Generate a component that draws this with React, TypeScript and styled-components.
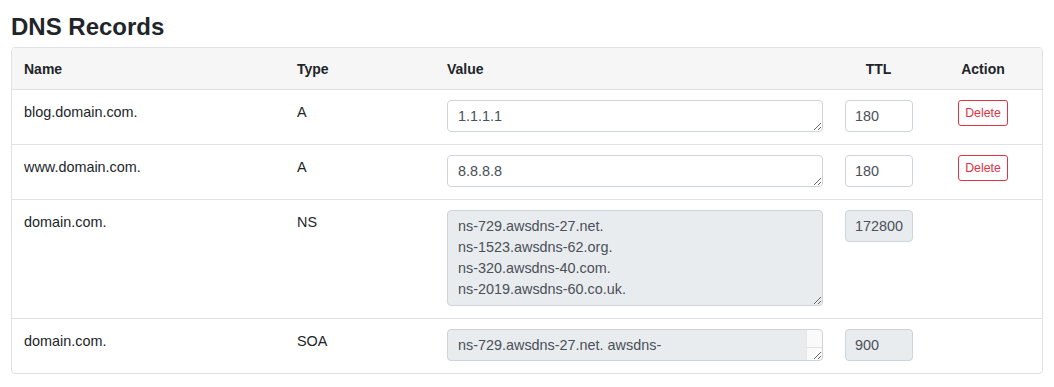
import React from 'react';
import styled, { createGlobalStyle } from 'styled-components';

type DnsRecord = {
  name: string;
  type: string;
  value: string;
  ttl: string;
  locked: boolean;
  lines: number;
  overflow?: boolean;
};

const records: DnsRecord[] = [
  { name: 'blog.domain.com.', type: 'A', value: '1.1.1.1', ttl: '180', locked: false, lines: 1 },
  { name: 'www.domain.com.', type: 'A', value: '8.8.8.8', ttl: '180', locked: false, lines: 1 },
  {
    name: 'domain.com.',
    type: 'NS',
    value: 'ns-729.awsdns-27.net.\nns-1523.awsdns-62.org.\nns-320.awsdns-40.com.\nns-2019.awsdns-60.co.uk.',
    ttl: '172800',
    locked: true,
    lines: 4,
  },
  {
    name: 'domain.com.',
    type: 'SOA',
    value: 'ns-729.awsdns-27.net. awsdns-\nhostmaster.amazon.com. 1 7200 900 1209600 86400',
    ttl: '900',
    locked: true,
    lines: 1,
    overflow: true,
  },
];

export default function App() {
  return (
    <>
      <GlobalStyle />
      <Page>
        <Title>DNS Records</Title>
        <Card>
          <Table>
            <colgroup>
              <col style={{ width: 273 }} />
              <col style={{ width: 150 }} />
              <col style={{ width: 398 }} />
              <col style={{ width: 91 }} />
              <col style={{ width: 118 }} />
            </colgroup>
            <thead>
              <tr>
                <HeadCell>Name</HeadCell>
                <HeadCell>Type</HeadCell>
                <HeadCell>Value</HeadCell>
                <HeadCell $center>TTL</HeadCell>
                <HeadCell $center>Action</HeadCell>
              </tr>
            </thead>
            <tbody>
              {records.map((r, i) => (
                <Row key={i}>
                  <Cell>{r.name}</Cell>
                  <Cell>{r.type}</Cell>
                  <FieldCell $padRight={10}>
                    <ValueArea
                      $locked={r.locked}
                      $lines={r.lines}
                      $overflow={!!r.overflow}
                      readOnly={r.locked}
                      defaultValue={r.value}
                    />
                  </FieldCell>
                  <FieldCell $padRight={11}>
                    <TtlInput $locked={r.locked} readOnly={r.locked} defaultValue={r.ttl} />
                  </FieldCell>
                  <FieldCell $center>
                    {!r.locked && <DeleteButton>Delete</DeleteButton>}
                  </FieldCell>
                </Row>
              ))}
            </tbody>
          </Table>
        </Card>
      </Page>
    </>
  );
}

const GlobalStyle = createGlobalStyle`
  body {
    margin: 0;
    background: #fff;
    font-family: "Liberation Sans", Arial, sans-serif;
    color: #212529;
  }
`;

const Page = styled.div`
  padding: 12px 11px 14px;
`;

const Title = styled.h4`
  margin: 0 0 6px;
  font-size: 24px;
  line-height: 29px;
  font-weight: 700;
  color: #212529;
`;

const Card = styled.div`
  border: 1px solid #dee2e6;
  border-radius: 4px;
  overflow: hidden;
`;

const Table = styled.table`
  width: 100%;
  table-layout: fixed;
  border-collapse: collapse;
  font-size: 14.4px;
`;

const HeadCell = styled.th<{ $center?: boolean }>`
  background: #f6f6f6;
  padding: 12px 12px 11px;
  line-height: 18px;
  font-size: 14px;
  font-weight: 700;
  text-align: ${(p) => (p.$center ? 'center' : 'left')};
  border-bottom: 1px solid #dee2e6;
`;

const Row = styled.tr`
  & + & {
    border-top: 1px solid #dee2e6;
  }
`;

const Cell = styled.td`
  padding: 12px;
  line-height: 20px;
  vertical-align: top;
`;

const FieldCell = styled.td<{ $center?: boolean; $padRight?: number }>`
  padding: 10px ${(p) => p.$padRight ?? 12}px 12px 12px;
  vertical-align: top;
  text-align: ${(p) => (p.$center ? 'center' : 'left')};
`;

const ValueArea = styled.textarea<{ $locked: boolean; $lines: number; $overflow: boolean }>`
  display: block;
  box-sizing: border-box;
  width: 100%;
  height: ${(p) => (p.$lines === 1 ? 32 : p.$lines * 21 + 12)}px;
  margin: 0;
  padding: 5px 10px 4px;
  font-family: "Liberation Sans", Arial, sans-serif;
  font-size: 14.4px;
  line-height: 21px;
  color: #495057;
  background-color: ${(p) => (p.$locked ? '#e9ecef' : '#fff')};
  border: 1px solid #ced4da;
  border-radius: 4px;
  outline: none;
  ${(p) =>
    p.$overflow &&
    `
    background-origin: border-box;
    background-repeat: no-repeat;
    background-image:
      linear-gradient(#e2e2e2, #e2e2e2),
      linear-gradient(to right, #e6e6e6, #e6e6e6 1px, #fafafa 1px);
    background-size: 15px 1px, 16px 100%;
    background-position: right 1px top 18px, right 1px top 0;
  `}
`;

const TtlInput = styled.input<{ $locked: boolean }>`
  display: block;
  box-sizing: border-box;
  width: 100%;
  height: 32px;
  margin: 0;
  padding: 0 4px 0 9px;
  font-family: "Liberation Sans", Arial, sans-serif;
  font-size: 14.4px;
  color: #495057;
  background: ${(p) => (p.$locked ? '#e9ecef' : '#fff')};
  border: 1px solid #ced4da;
  border-radius: 4px;
  outline: none;
`;

const DeleteButton = styled.button`
  display: inline-block;
  margin: 0;
  padding: 4px 6px;
  font-family: "Liberation Sans", Arial, sans-serif;
  font-size: 12.3px;
  line-height: 16px;
  color: #dc3545;
  background: #fff;
  border: 1px solid #dc3545;
  border-radius: 3px;
  cursor: pointer;
`;
